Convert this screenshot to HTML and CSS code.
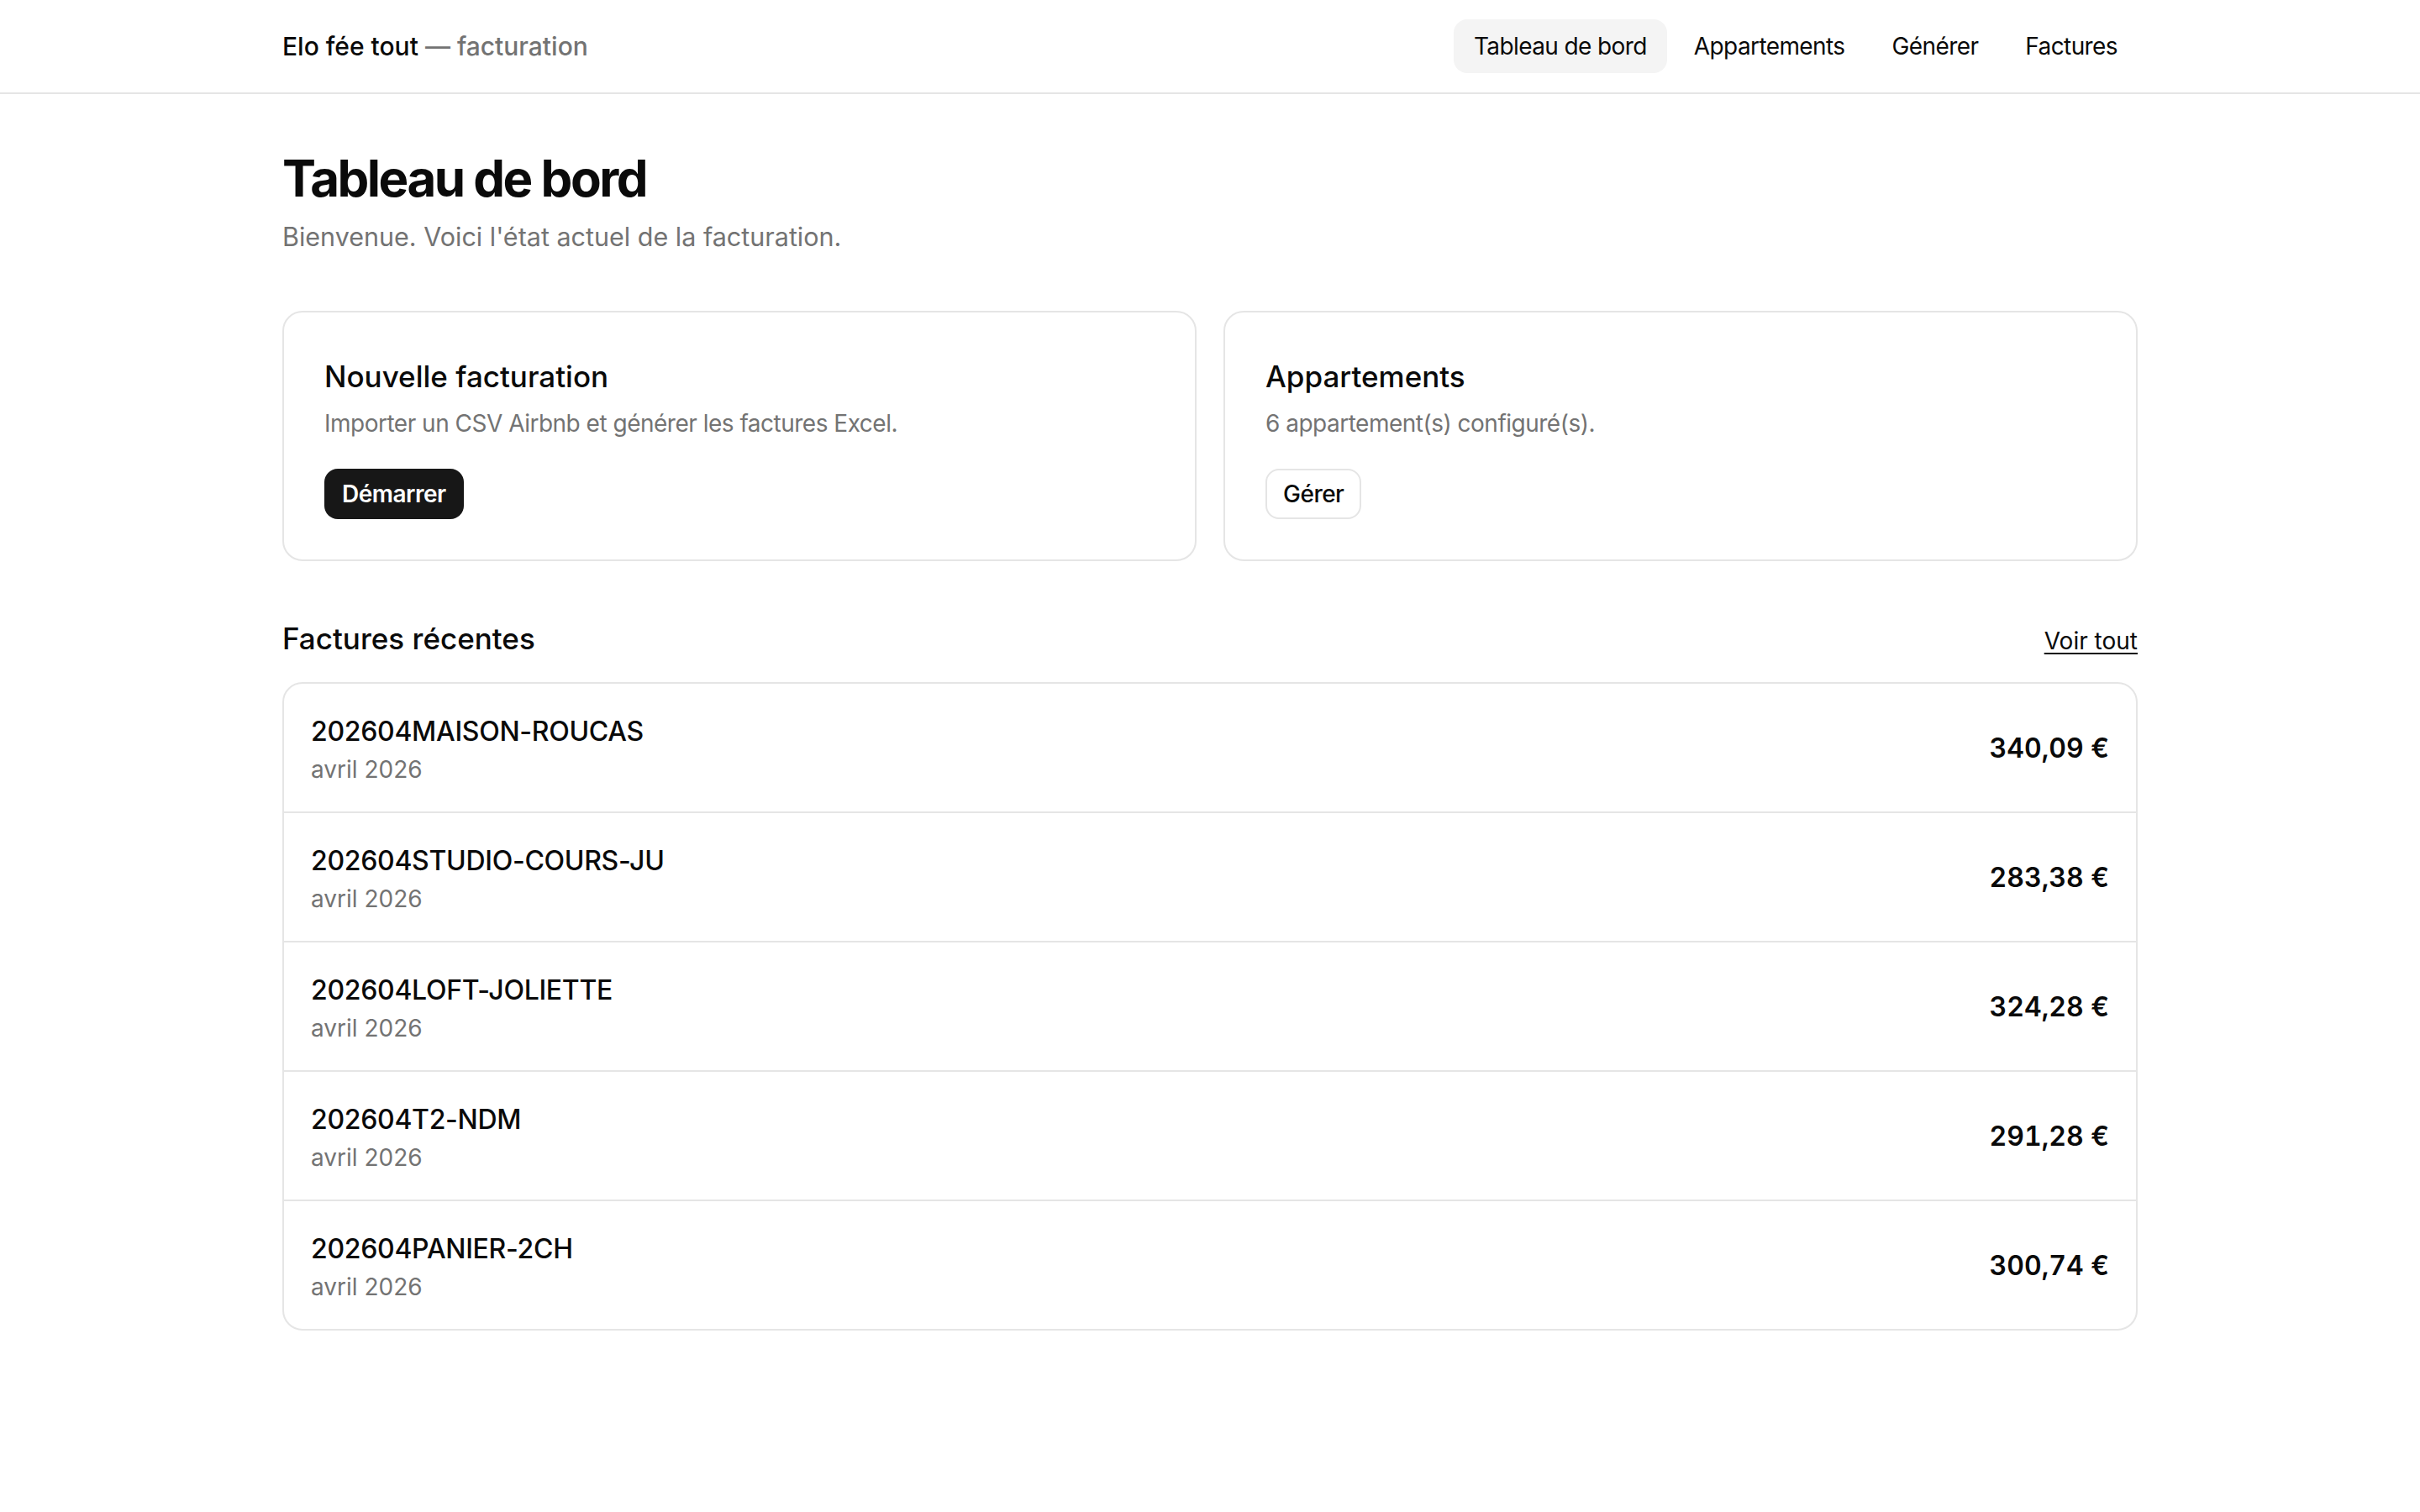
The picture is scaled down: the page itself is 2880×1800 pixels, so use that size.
FILE: index.html
```html
<!DOCTYPE html>
<html lang="fr">
<head>
    <meta charset="UTF-8">
    <meta name="viewport" content="width=device-width, initial-scale=1.0">
    <title>Tableau de bord — Elo fée tout</title>
    <link rel="stylesheet" href="styles.css">
</head>
<body>
    <header class="topbar">
        <div class="topbar-inner">
            <a class="brand" href="#">Elo fée tout <span class="brand-sub">— facturation</span></a>
            <nav class="nav">
                <a class="nav-link active" href="#">Tableau de bord</a>
                <a class="nav-link" href="#">Appartements</a>
                <a class="nav-link" href="#">Générer</a>
                <a class="nav-link" href="#">Factures</a>
            </nav>
        </div>
    </header>

    <main class="page">
        <h1 class="page-title">Tableau de bord</h1>
        <p class="page-lead">Bienvenue. Voici l'état actuel de la facturation.</p>

        <div class="cards">
            <section class="card">
                <h2 class="card-title">Nouvelle facturation</h2>
                <p class="card-text">Importer un CSV Airbnb et générer les factures Excel.</p>
                <div class="card-actions">
                    <a class="btn btn-dark" href="#">Démarrer</a>
                </div>
            </section>
            <section class="card">
                <h2 class="card-title">Appartements</h2>
                <p class="card-text">6 appartement(s) configuré(s).</p>
                <div class="card-actions">
                    <a class="btn btn-light" href="#">Gérer</a>
                </div>
            </section>
        </div>

        <section class="recent">
            <div class="recent-head">
                <h2 class="recent-title">Factures récentes</h2>
                <a class="see-all" href="#">Voir tout</a>
            </div>
            <ul class="invoice-list">
                <li class="invoice">
                    <div>
                        <div class="invoice-ref">202604MAISON-ROUCAS</div>
                        <div class="invoice-date">avril 2026</div>
                    </div>
                    <div class="invoice-amount">340,09 €</div>
                </li>
                <li class="invoice">
                    <div>
                        <div class="invoice-ref">202604STUDIO-COURS-JU</div>
                        <div class="invoice-date">avril 2026</div>
                    </div>
                    <div class="invoice-amount">283,38 €</div>
                </li>
                <li class="invoice">
                    <div>
                        <div class="invoice-ref">202604LOFT-JOLIETTE</div>
                        <div class="invoice-date">avril 2026</div>
                    </div>
                    <div class="invoice-amount">324,28 €</div>
                </li>
                <li class="invoice">
                    <div>
                        <div class="invoice-ref">202604T2-NDM</div>
                        <div class="invoice-date">avril 2026</div>
                    </div>
                    <div class="invoice-amount">291,28 €</div>
                </li>
                <li class="invoice">
                    <div>
                        <div class="invoice-ref">202604PANIER-2CH</div>
                        <div class="invoice-date">avril 2026</div>
                    </div>
                    <div class="invoice-amount">300,74 €</div>
                </li>
            </ul>
        </section>
    </main>
</body>
</html>
```

FILE: styles.css
```css
body {
    font-family: 'Inter', 'Liberation Sans', sans-serif;
    margin: 0;
    padding: 0;
    background: #fff;
    color: #0a0a0a;
}
a {
    color: inherit;
    text-decoration: none;
}
h1, h2, p {
    margin: 0;
}

/* top bar */
.topbar {
    border-bottom: 2px solid #e5e5e5;
}
.topbar-inner {
    width: 2208px;
    margin: 0 auto;
    height: 110px;
    display: flex;
    justify-content: space-between;
    align-items: center;
}
.brand {
    font-size: 30px;
    font-weight: 500;
}
.brand-sub {
    color: #737373;
}
.nav {
    display: flex;
    gap: 8px;
}
.nav-link {
    font-size: 28px;
    line-height: 64px;
    padding: 0 24px;
    border-radius: 16px;
    letter-spacing: -0.6px;
}
.nav-link.active {
    background-color: #f4f4f4;
}

/* page */
.page {
    width: 2208px;
    margin: 0 auto;
    padding: 64px 0 120px;
}
.page-title {
    font-size: 60px;
    line-height: 72px;
    font-weight: 700;
    letter-spacing: -2.5px;
}
.page-lead {
    margin-top: 14px;
    font-size: 30.5px;
    line-height: 40px;
    color: #737373;
}

.cards {
    margin-top: 68px;
    display: grid;
    grid-template-columns: 1fr 1fr;
    gap: 32px;
}
.card {
    border: 2px solid #e5e5e5;
    border-radius: 24px;
    padding: 48px;
}
.card-title {
    font-size: 35px;
    line-height: 56px;
    font-weight: 500;
}
.card-text {
    margin-top: 8px;
    font-size: 28px;
    line-height: 40px;
    letter-spacing: -0.5px;
    color: #737373;
}
.card-actions {
    margin-top: 34px;
    display: flex;
}
.btn {
    font-size: 28px;
    line-height: 36px;
    font-weight: 600;
    padding: 10px 19px;
    border-radius: 16px;
    border: 2px solid transparent;
    letter-spacing: -0.5px;
}
.btn-dark {
    background-color: #171717;
    color: #fff;
}
.btn-light {
    background-color: #fff;
    border-color: #e5e5e5;
    font-weight: 500;
}

/* recent invoices */
.recent {
    margin-top: 68px;
}
.recent-head {
    display: flex;
    justify-content: space-between;
    align-items: baseline;
    margin-bottom: 28px;
}
.recent-title {
    font-size: 35px;
    line-height: 48px;
    font-weight: 500;
}
.see-all {
    font-size: 28px;
    text-decoration: underline;
    text-decoration-thickness: 2px;
    text-underline-offset: 4px;
}
.invoice-list {
    list-style: none;
    margin: 0;
    padding: 0;
    border: 2px solid #e5e5e5;
    border-radius: 24px;
}
.invoice {
    display: flex;
    justify-content: space-between;
    align-items: center;
    padding: 37px 32px 30px;
}
.invoice + .invoice {
    border-top: 2px solid #e5e5e5;
}
.invoice-ref {
    font-size: 32px;
    line-height: 40px;
    font-weight: 500;
    letter-spacing: -0.3px;
}
.invoice-date {
    margin-top: 5px;
    font-size: 28px;
    line-height: 40px;
    color: #737373;
}
.invoice-amount {
    padding-bottom: 7px;
    font-size: 32px;
    font-weight: 600;
    font-variant-numeric: tabular-nums;
}
```
